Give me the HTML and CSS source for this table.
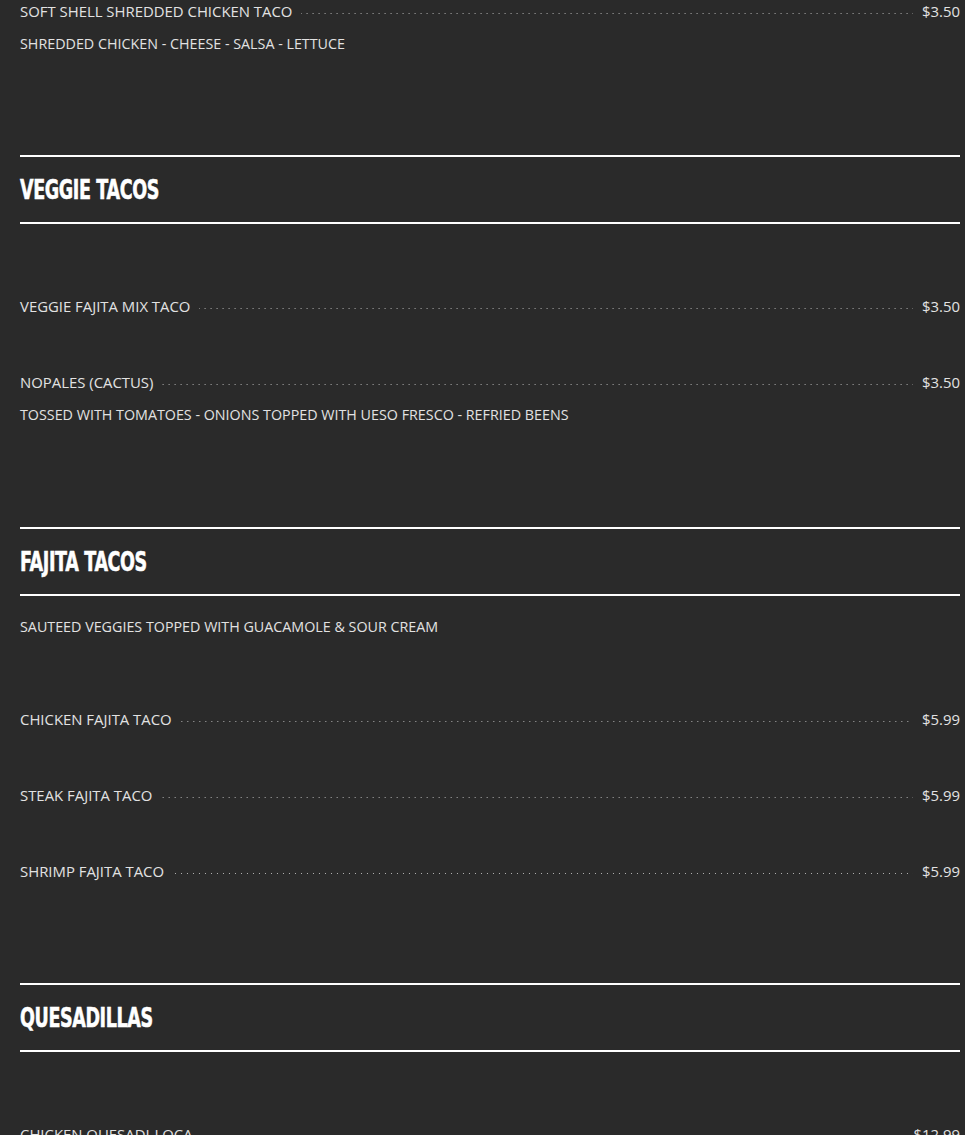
FILE: index.html
```html
<!DOCTYPE html>
<html lang="en">
<head>
<meta charset="utf-8">
<title>Menu</title>
<link rel="stylesheet" href="styles.css">
</head>
<body>
<main class="menu">
  <section class="sec sec-first">
    <div class="sec-body sec-body-top">
      <div class="item">
        <div class="row"><span class="name">SOFT SHELL SHREDDED CHICKEN TACO</span><span class="dots"></span><span class="price">$3.50</span></div>
        <p class="desc">SHREDDED CHICKEN - CHEESE - SALSA - LETTUCE</p>
      </div>
    </div>
  </section>

  <section class="sec">
    <h2 class="sec-head"><span class="sec-title">VEGGIE TACOS</span></h2>
    <div class="sec-body">
      <div class="item">
        <div class="row"><span class="name">VEGGIE FAJITA MIX TACO</span><span class="dots"></span><span class="price">$3.50</span></div>
      </div>
      <div class="item">
        <div class="row"><span class="name">NOPALES (CACTUS)</span><span class="dots"></span><span class="price">$3.50</span></div>
        <p class="desc">TOSSED WITH TOMATOES - ONIONS TOPPED WITH UESO FRESCO - REFRIED BEENS</p>
      </div>
    </div>
  </section>

  <section class="sec">
    <h2 class="sec-head"><span class="sec-title">FAJITA TACOS</span></h2>
    <div class="sec-body sec-body-intro">
      <p class="intro">SAUTEED VEGGIES TOPPED WITH GUACAMOLE &amp; SOUR CREAM</p>
      <div class="item">
        <div class="row"><span class="name">CHICKEN FAJITA TACO</span><span class="dots"></span><span class="price">$5.99</span></div>
      </div>
      <div class="item">
        <div class="row"><span class="name">STEAK FAJITA TACO</span><span class="dots"></span><span class="price">$5.99</span></div>
      </div>
      <div class="item">
        <div class="row"><span class="name">SHRIMP FAJITA TACO</span><span class="dots"></span><span class="price">$5.99</span></div>
      </div>
    </div>
  </section>

  <section class="sec">
    <h2 class="sec-head"><span class="sec-title">QUESADILLAS</span></h2>
    <div class="sec-body">
      <div class="item">
        <div class="row"><span class="name">CHICKEN QUESADI-LOCA</span><span class="dots"></span><span class="price">$12.99</span></div>
      </div>
    </div>
  </section>
</main>
</body>
</html>
```

FILE: styles.css
```css
html, body {
  margin: 0;
  padding: 0;
  background: #2a2a2a;
}

.menu {
  padding: 0 5px 0 20px;
  font-family: "Open Sans", "DejaVu Sans", sans-serif;
  font-size: 14.9px;
  color: #e2e2e2;
}

.sec-head {
  margin: 0;
  height: 65px;
  display: flex;
  align-items: center;
  border-top: 2px solid #ffffff;
  border-bottom: 2px solid #ffffff;
  font-family: "DejaVu Sans", sans-serif;
  font-weight: 700;
  font-size: 27px;
  letter-spacing: -0.6px;
  color: #ffffff;
}

.sec-title {
  display: inline-block;
  transform: scaleX(0.65);
  transform-origin: left center;
  -webkit-text-stroke: 0.6px #ffffff;
}

.sec-body {
  padding: 71px 0 101px;
  display: flex;
  flex-direction: column;
  gap: 54px;
}

.sec-body-top {
  padding-top: 0;
  padding-bottom: 100px;
}

.sec-body-intro {
  padding-top: 20px;
}

.intro {
  margin: 0 0 16px;
  line-height: 22px;
  font-size: 14.3px;
}

.row {
  display: flex;
  align-items: baseline;
  line-height: 22px;
}

.name, .price {
  white-space: nowrap;
}

.dots {
  flex: 1;
  margin: 0 9px;
  height: 4px;
  background-image: linear-gradient(to right, #b0b0b0 1px, transparent 1px);
  background-size: 6px 1px;
  background-repeat: repeat-x;
  background-position: right top;
}

.desc {
  margin: 11px 0 0;
  line-height: 22px;
  font-size: 14.3px;
}
```
